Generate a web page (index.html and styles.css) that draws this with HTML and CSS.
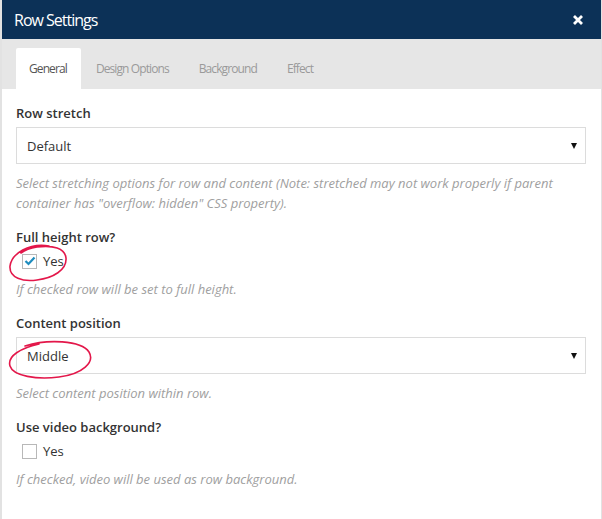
FILE: index.html
```html
<!DOCTYPE html>
<html>
<head>
<meta charset="utf-8">
<link rel="stylesheet" href="styles.css">
</head>
<body>
<div class="panel">
  <div class="header">
    <span class="title">Row Settings</span>
    <span class="close" aria-label="close">
      <svg width="12" height="12" viewBox="0 0 12 12"><path d="M2 2 L10 10 M10 2 L2 10" stroke="#fff" stroke-width="2.8" stroke-linecap="butt"/></svg>
    </span>
  </div>
  <div class="tabs">
    <div class="tab active">General</div>
    <div class="tab">Design Options</div>
    <div class="tab">Background</div>
    <div class="tab">Effect</div>
  </div>
  <div class="content">
    <div class="field">
      <div class="label">Row stretch</div>
      <div class="select"><span>Default</span><span class="arrow"></span></div>
      <div class="help">Select stretching options for row and content (Note: stretched may not work properly if parent container has "overflow: hidden" CSS property).</div>
    </div>
    <div class="field">
      <div class="label">Full height row?</div>
      <div class="check-row">
        <span class="box checked"><svg width="12" height="10" viewBox="0 0 12 10"><path d="M1.5 5 L4.5 8 L10.5 1.5" fill="none" stroke="#1e8cbe" stroke-width="2.2"/></svg></span>
        <span class="yes">Yes</span>
      </div>
      <div class="help">If checked row will be set to full height.</div>
    </div>
    <div class="field">
      <div class="label">Content position</div>
      <div class="select"><span>Middle</span><span class="arrow"></span></div>
      <div class="help">Select content position within row.</div>
    </div>
    <div class="field">
      <div class="label">Use video background?</div>
      <div class="check-row">
        <span class="box"></span>
        <span class="yes">Yes</span>
      </div>
      <div class="help">If checked, video will be used as row background.</div>
    </div>
  </div>
  <svg class="mark mark1" width="64" height="44" viewBox="0 0 64 44">
    <path d="M42 4 C22 1 5 11 3 24 C2 36 16 40 30 38 C46 36 60 28 59 16 C58 6 46 3 30 5 C24 6 18 8 14 11" fill="none" stroke="#e3174a" stroke-width="1.6" stroke-linecap="round"/>
  </svg>
  <svg class="mark mark2" width="90" height="44" viewBox="0 0 90 44">
    <path d="M18 8 C40 1 74 2 82 14 C88 24 76 36 52 39 C30 42 6 38 3 28 C0 18 14 10 32 6" fill="none" stroke="#e3174a" stroke-width="1.6" stroke-linecap="round"/>
  </svg>
</div>
</body>
</html>
```

FILE: styles.css
```css
* { box-sizing: border-box; }
html, body { margin: 0; padding: 0; background: #fff; }
body { font-family: "Open Sans", "Liberation Sans", sans-serif; }
.panel {
  position: relative;
  width: 602px;
  height: 519px;
  border-left: 2px solid #e2e2e2;
  border-right: 1px solid #e2e2e2;
  background: #fff;
  overflow: hidden;
}
.header {
  height: 39px;
  background: #0c3157;
  display: flex;
  align-items: center;
  justify-content: space-between;
  padding: 0 18px 0 14px;
  margin-left: -2px;
  margin-right: -1px;
}
.title { color: #fff; font-size: 16px; letter-spacing: -1px; }
.close { display: flex; align-items: center; }
.tabs {
  height: 50px;
  background: #e6e6e6;
  display: flex;
  align-items: flex-end;
  padding-left: 14px;
}
.tab {
  height: 41px;
  line-height: 41px;
  padding: 0 15px;
  font-size: 12px;
  letter-spacing: -0.9px;
  color: #9a9a9a;
}
.tab.active { background: #fff; color: #555; border-radius: 2px 2px 0 0; padding: 0 14px 0 13px; }
.content { padding: 14px 15px 0 14px; }
.field { margin-bottom: 14px; }
.label { font-size: 13px; font-weight: 600; color: #333; line-height: 20px; margin-bottom: 4px; }
.select {
  height: 37px;
  border: 1px solid #dcdcdc;
  display: flex;
  align-items: center;
  justify-content: space-between;
  padding: 0 8px 0 10px;
  font-size: 13px;
  color: #333;
}
.arrow {
  width: 0; height: 0;
  border-left: 3.5px solid transparent;
  border-right: 3.5px solid transparent;
  border-top: 6px solid #111;
}
.help {
  font-size: 13px;
  font-style: italic;
  color: #a0a0a0;
  line-height: 20px;
  margin-top: 9px;
}
.check-row { display: flex; align-items: center; height: 20px; padding-left: 6px; margin-top: 1px; }
.check-row + .help { margin-top: 8px; }
.box {
  width: 15px; height: 15px;
  border: 1px solid #b8b8b8;
  background: #fff;
  display: inline-flex;
  align-items: center;
  justify-content: center;
  margin-right: 6px;
}
.yes { font-size: 13px; color: #333; }
.mark { position: absolute; }
.mark1 { left: 5px; top: 242px; }
.mark2 { left: 5px; top: 338px; }
```
